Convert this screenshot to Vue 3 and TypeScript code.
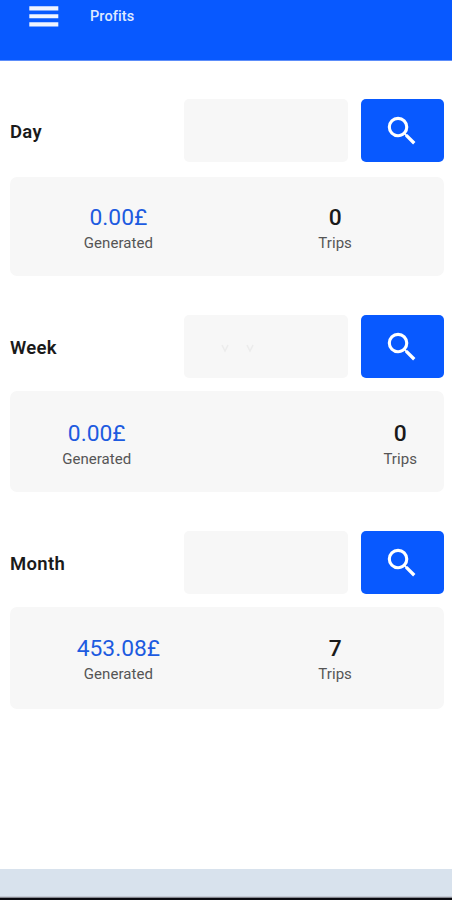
<script setup lang="ts">
interface Stat {
  value: string
  label: string
  kind: 'money' | 'count'
}

interface Period {
  id: string
  title: string
  stats: Stat[]
}

const makeStats = (amount: string, trips: string): Stat[] => [
  { value: amount, label: 'Generated', kind: 'money' },
  { value: trips, label: 'Trips', kind: 'count' },
]

const periods: Period[] = [
  { id: 'day', title: 'Day', stats: makeStats('0.00£', '0') },
  { id: 'week', title: 'Week', stats: makeStats('0.00£', '0') },
  { id: 'month', title: 'Month', stats: makeStats('453.08£', '7') },
]
</script>

<template>
  <div class="screen">
    <header class="bar">
      <svg class="menu" viewBox="0 0 30 21" aria-hidden="true">
        <path d="M0.3 0.2h29v4.2h-29zM0.3 8.2h29v4.1h-29zM0.3 16.3h29v4.1h-29z" />
      </svg>
      <span class="title">Profits</span>
    </header>

    <main class="content">
      <section v-for="p in periods" :key="p.id" class="period" :class="p.id">
        <div class="filter">
          <h2 class="name">{{ p.title }}</h2>
          <div class="field">
            <svg v-if="p.id === 'week'" class="ticks" viewBox="0 0 34 12" aria-hidden="true">
              <path d="M1 4l3 6 3-6M26 4l3 6 3-6" />
            </svg>
          </div>
          <button class="search" type="button" aria-label="Search">
            <svg viewBox="0 0 24 24" aria-hidden="true">
              <path d="M15.5 14h-.79l-.28-.27A6.471 6.471 0 0 0 16 9.5 6.5 6.5 0 1 0 9.5 16c1.61 0 3.09-.59 4.23-1.57l.27.28v.79l5 4.99L20.49 19l-4.99-5zm-6 0C7.01 14 5 11.99 5 9.5S7.01 5 9.5 5 14 7.01 14 9.5 11.99 14 9.5 14z" />
            </svg>
          </button>
        </div>
        <div class="card">
          <div v-for="s in p.stats" :key="s.label" class="stat" :class="s.kind">
            <span class="value">{{ s.value }}</span>
            <span class="label">{{ s.label }}</span>
          </div>
        </div>
      </section>
    </main>

    <footer class="system"></footer>
  </div>
</template>

<style>
body {
  margin: 0;
}
</style>

<style scoped>
.screen {
  display: flex;
  flex-direction: column;
  box-sizing: border-box;
  height: 900px;
  overflow: hidden;
  background: #fff;
  color: #1a1a1a;
  font-family: Roboto, "Liberation Sans", sans-serif;
}

.bar {
  display: flex;
  align-items: flex-start;
  flex: none;
  box-sizing: border-box;
  height: 61px;
  padding: 6px 0 0 29px;
  background: #0859ff;
  border-bottom: 1px solid #5c8dfa;
}

.menu {
  width: 30px;
  height: 21px;
  fill: #f0f4ff;
}

.title {
  margin-left: 31px;
  font-size: 14.5px;
  font-weight: 500;
  line-height: 22px;
  letter-spacing: 0.1px;
  color: #dfe9ff;
}

.content {
  flex: 1;
  padding: 38px 8.5px 0 10px;
}

.period {
  height: 216px;
}

.filter {
  display: flex;
  align-items: stretch;
  height: 63px;
  margin-bottom: 15px;
}

.name {
  flex: 1;
  align-self: center;
  margin: 3px 0 0;
  font-size: 18.5px;
  font-weight: 600;
  line-height: 22px;
  letter-spacing: 0.3px;
}

.field {
  width: 164px;
  margin-right: 13px;
  border-radius: 5px;
  background: #f7f7f7;
}

.ticks {
  display: block;
  width: 34px;
  height: 12px;
  margin: 26px 0 0 37px;
  fill: none;
  stroke: #ececec;
  stroke-width: 1.6;
}

.search {
  display: flex;
  align-items: center;
  justify-content: center;
  width: 82.5px;
  padding: 0 1px 0 0;
  border: 0;
  border-radius: 5px;
  background: #0859ff;
}

.search svg {
  width: 38px;
  height: 38px;
  fill: #fff;
}

.card {
  display: flex;
  justify-content: space-between;
  box-sizing: border-box;
  height: 99px;
  padding-top: 27px;
  border-radius: 7px;
  background: #f7f7f7;
}

.week .filter {
  margin-bottom: 13px;
}

.week .card {
  height: 101px;
  padding-top: 29px;
}

.month .filter {
  margin-bottom: 13px;
}

.month .card {
  height: 102px;
  padding-top: 28px;
}

.stat {
  display: flex;
  flex-direction: column;
  align-items: center;
  width: 50%;
}

.week .money {
  width: 40%;
}

.week .count {
  width: 20%;
}

.value {
  font-size: 22.8px;
  line-height: 28px;
}

.money .value {
  color: #1d5be0;
}

.count .value {
  font-weight: 500;
}

.label {
  font-size: 15px;
  line-height: 22px;
  letter-spacing: 0.05px;
  color: #555;
}

.system {
  flex: none;
  box-sizing: border-box;
  height: 31px;
  background: #d8e2ed;
  border-bottom: 2px solid #08080e;
  box-shadow: inset 0 -1px #85878f, inset 0 -2px #c4cad4;
}
</style>
